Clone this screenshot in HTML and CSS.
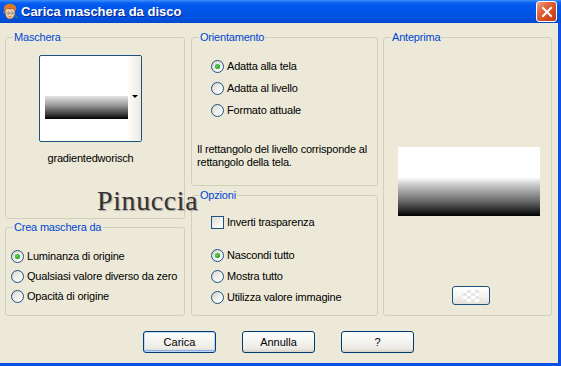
FILE: index.html
```html
<!DOCTYPE html>
<html lang="it">
<head>
    <meta charset="UTF-8">
    <title>Carica maschera da disco</title>
    <link rel="stylesheet" href="styles.css">
</head>
<body>

    <div class="window">
        <div class="titlebar">
            <svg class="app-icon" width="16" height="18" viewBox="0 0 16 18">
                <path d="M2 7 C1 3 5 0 9 1 C13 1 15 4 14 8 L12 6 L10 8 L8 5 L6 8 L4 6 Z" fill="#e0782c"/>
                <path d="M3 8 C3 5 6 5 8 6 C11 5 13 6 13 9 C13 13 11 16 8 16 C5 16 3 13 3 8 Z" fill="#f6d0a4" stroke="#8a4a20" stroke-width="0.6"/>
                <circle cx="6.2" cy="10" r="1.3" fill="#fff" stroke="#333" stroke-width="0.4"/>
                <circle cx="10" cy="10" r="1.3" fill="#fff" stroke="#333" stroke-width="0.4"/>
                <circle cx="6.4" cy="10.2" r="0.6" fill="#2a5fb0"/>
                <circle cx="10.2" cy="10.2" r="0.6" fill="#2a5fb0"/>
                <path d="M6.5 13.5 Q8 14.5 9.5 13.5" stroke="#a33" stroke-width="0.7" fill="none"/>
                <path d="M1 9 L3 7 L2 11 Z" fill="#e0782c"/>
                <path d="M13 12 L15.5 14 L14 15 Z" fill="#3aa040"/>
            </svg>
            <span class="title">Carica maschera da disco</span>
            <div class="close-btn">
                <svg width="12" height="12" viewBox="0 0 12 12">
                    <path d="M2 2 L10 10 M10 2 L2 10" stroke="#fff" stroke-width="2" stroke-linecap="square"/>
                </svg>
            </div>
        </div>

        <div class="client">
            <div class="groups">
                <div class="col col-left">
                    <div class="group g-maschera">
                        <span class="legend">Maschera</span>
                        <div class="thumb-wrap">
                            <div class="thumb">
                                <div class="thumb-view"><div class="thumb-grad"></div></div>
                                <div class="thumb-drop"><span class="drop-arrow"></span></div>
                            </div>
                            <div class="thumb-name">gradientedworisch</div>
                        </div>
                    </div>
                    <div class="group g-crea">
                        <span class="legend">Crea maschera da</span>
                        <div class="options opt-crea">
                            <label class="option"><span class="radio checked"></span>Luminanza di origine</label>
                            <label class="option"><span class="radio"></span>Qualsiasi valore diverso da zero</label>
                            <label class="option"><span class="radio"></span>Opacità di origine</label>
                        </div>
                    </div>
                </div>

                <div class="col col-mid">
                    <div class="group g-orient">
                        <span class="legend">Orientamento</span>
                        <div class="options opt-orient">
                            <label class="option"><span class="radio checked"></span>Adatta alla tela</label>
                            <label class="option"><span class="radio"></span>Adatta al livello</label>
                            <label class="option"><span class="radio"></span>Formato attuale</label>
                        </div>
                        <p class="desc">Il rettangolo del livello corrisponde al rettangolo della tela.</p>
                    </div>
                    <div class="group g-opzioni">
                        <span class="legend">Opzioni</span>
                        <label class="option check-row"><span class="checkbox"></span>Inverti trasparenza</label>
                        <div class="options opt-opzioni">
                            <label class="option"><span class="radio checked"></span>Nascondi tutto</label>
                            <label class="option"><span class="radio"></span>Mostra tutto</label>
                            <label class="option"><span class="radio"></span>Utilizza valore immagine</label>
                        </div>
                    </div>
                </div>

                <div class="group g-anteprima">
                    <span class="legend">Anteprima</span>
                    <div class="preview"></div>
                    <div class="bg-btn"><span class="checker"></span></div>
                </div>
            </div>

            <div class="buttons">
                <button class="btn btn-default">Carica</button>
                <button class="btn">Annulla</button>
                <button class="btn">?</button>
            </div>
        </div>

        <div class="watermark">Pinuccia</div>
    </div>

</body>
</html>
```

FILE: styles.css
```css
body {
    margin: 0;
    font-family: Tahoma, "Liberation Sans", Arial, sans-serif;
    font-size: 11px;
    letter-spacing: -0.2px;
    color: #000;
}

.window {
    position: relative;
    width: 561px;
    height: 366px;
    display: flex;
    flex-direction: column;
    background: #ece9d8;
    overflow: hidden;
}

.titlebar {
    height: 23px;
    flex: none;
    display: flex;
    align-items: center;
    padding-left: 2px;
    background: linear-gradient(#3d8ff9 0, #0a5ff0 3px, #0058ee 6px, #0055e6 50%, #0052df 80%, #0046cf 100%);
    color: #fff;
}

.app-icon {
    flex: none;
}

.title {
    margin-left: 3px;
    font-family: "Liberation Sans", Arial, sans-serif;
    font-weight: bold;
    font-size: 13px;
    letter-spacing: 0;
    text-shadow: 1px 1px 0 #0c1f8c;
}

.close-btn {
    margin-left: auto;
    margin-right: 4px;
    width: 19px;
    height: 19px;
    align-self: flex-start;
    margin-top: 1px;
    display: flex;
    align-items: center;
    justify-content: center;
    border: 1px solid #fff;
    border-radius: 3px;
    background: linear-gradient(135deg, #f0a48a 0%, #e2643e 35%, #d4471c 70%, #c23c14 100%);
}

.client {
    flex: 1;
    display: flex;
    flex-direction: column;
    padding: 14px 0 0 5px;
    border-right: 3px solid #0b4fe6;
    border-bottom: 3px solid #0b4fe6;
}

.groups {
    display: flex;
    height: 279px;
}

.col {
    display: flex;
    flex-direction: column;
}

.col-left {
    width: 180px;
    gap: 8px;
}

.col-mid {
    width: 187px;
    margin-left: 6px;
    gap: 9px;
}

.group {
    position: relative;
    box-sizing: border-box;
    border: 1px solid #d0d0bf;
    border-radius: 3px;
}

.legend {
    position: absolute;
    top: -7px;
    left: 7px;
    padding: 0 1px;
    line-height: 13px;
    color: #0046d5;
    background: #ece9d8;
}

/* Maschera */
.g-maschera {
    height: 182px;
    padding: 17px 0 0 33px;
}

.thumb-wrap {
    width: 103px;
}

.thumb {
    display: flex;
    box-sizing: border-box;
    width: 103px;
    height: 87px;
    border: 1px solid #1c5180;
    border-radius: 2px;
    background: #fff;
}

.thumb-view {
    width: 88px;
    padding: 40px 0 0 5px;
    box-sizing: border-box;
}

.thumb-grad {
    width: 83px;
    height: 23px;
    background: linear-gradient(#e4e4e4, #9a9a9a 40%, #3a3a3a 80%, #000);
}

.thumb-drop {
    width: 13px;
    display: flex;
    justify-content: center;
    padding-top: 39px;
    box-sizing: border-box;
    background: linear-gradient(to right, #fdfdfb, #ebe9e1);
}

.drop-arrow {
    width: 0;
    height: 0;
    border-left: 3px solid transparent;
    border-right: 3px solid transparent;
    border-top: 3px solid #000;
}

.thumb-name {
    margin-top: 10px;
    text-align: center;
    line-height: 13px;
}

/* option rows */
.options {
    display: flex;
    flex-direction: column;
}

.option {
    display: flex;
    align-items: center;
    gap: 3px;
    height: 13px;
    line-height: 13px;
    white-space: nowrap;
}

.radio {
    position: relative;
    flex: none;
    box-sizing: border-box;
    width: 13px;
    height: 13px;
    border: 1px solid #1c5180;
    border-radius: 50%;
    background: linear-gradient(135deg, #d4d3cb 0%, #f2f2ee 55%, #fff 100%);
}

.radio.checked::after {
    content: "";
    position: absolute;
    left: 3px;
    top: 3px;
    width: 5px;
    height: 5px;
    border-radius: 50%;
    background: radial-gradient(circle at 40% 40%, #61d261, #21a121 70%, #1a8a1a);
}

.checkbox {
    flex: none;
    box-sizing: border-box;
    width: 13px;
    height: 13px;
    border: 1px solid #1c5180;
    background: linear-gradient(135deg, #dcdbd3 0%, #f4f4f0 60%, #fff 100%);
}

.g-crea {
    height: 89px;
}

.opt-crea {
    padding: 22px 0 0 5px;
    gap: 7px;
}

/* Orientamento */
.g-orient {
    height: 149px;
}

.opt-orient {
    padding: 22px 0 0 19px;
    gap: 9px;
}

.desc {
    margin: 26px 0 0 5px;
    line-height: 13px;
    width: 178px;
}

/* Opzioni */
.g-opzioni {
    height: 121px;
}

.check-row {
    margin: 20px 0 0 19px;
}

.opt-opzioni {
    padding: 20px 0 0 19px;
    gap: 8px;
}

/* Anteprima */
.g-anteprima {
    width: 169px;
    height: 279px;
    margin-left: 5px;
    padding: 109px 0 0 14px;
}

.preview {
    width: 142px;
    height: 69px;
    background: linear-gradient(#fff 0, #fff 44%, #c4c4c4 56%, #6c6c6c 78%, #000 100%);
}

.bg-btn {
    display: flex;
    align-items: center;
    justify-content: center;
    box-sizing: border-box;
    width: 38px;
    height: 19px;
    margin: 70px 0 0 54px;
    border: 1px solid #1c5180;
    border-radius: 3px;
    background: linear-gradient(#fff, #f1f1ed 60%, #e2e0d8);
}

.checker {
    width: 16px;
    height: 12px;
    background: conic-gradient(#e6e6e6 25%, #fff 0 50%, #e6e6e6 0 75%, #fff 0) 0 0 / 8px 6px;
}

/* buttons */
.buttons {
    display: flex;
    gap: 26px;
    margin-top: 15px;
    padding-left: 138px;
}

.btn {
    width: 73px;
    height: 22px;
    padding: 0;
    font-family: Tahoma, "Liberation Sans", Arial, sans-serif;
    font-size: 11px;
    color: #000;
    border: 1px solid #003c74;
    border-radius: 3px;
    background: linear-gradient(#fff 0, #f5f5f1 40%, #ecebe5 80%, #d8d4c8 100%);
}

.btn-default {
    box-shadow: inset 0 0 0 1px #c2d6f7, inset 0 -1px 0 1px #8aaeea;
}

.watermark {
    position: absolute;
    left: 97px;
    top: 187px;
    font-family: "Liberation Serif", "DejaVu Serif", serif;
    font-size: 28px;
    line-height: 28px;
    letter-spacing: 0.6px;
    color: #333;
    text-shadow: 1px 1px 1px #a8a8a0;
}
```
